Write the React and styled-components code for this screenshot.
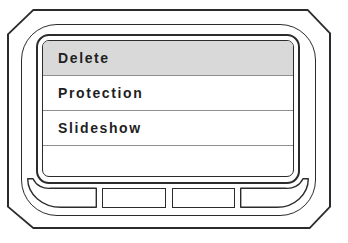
import React from "react";
import styled, { createGlobalStyle } from "styled-components";

const GlobalStyle = createGlobalStyle`
  html, body {
    margin: 0;
    padding: 0;
    background: #ffffff;
  }
  * {
    box-sizing: border-box;
  }
`;

const LINE = "#2b2b2b";

const Page = styled.div`
  width: 348px;
  height: 243px;
  padding: 9px 17px 14px 7px;
  background: #ffffff;
`;

const Frame = styled.div`
  width: 324px;
  height: 220px;
  padding: 1.8px;
  background: ${LINE};
  clip-path: polygon(
    26px 0,
    calc(100% - 23px) 0,
    100% 24px,
    100% calc(100% - 22px),
    calc(100% - 21px) 100%,
    26px 100%,
    0 calc(100% - 22px),
    0 25px
  );
`;

const FrameInner = styled.div`
  height: 100%;
  display: flex;
  flex-direction: column;
  padding: 13.2px 13.2px 11.2px 12.2px;
  background: #ffffff;
  clip-path: polygon(
    25px 0,
    calc(100% - 22px) 0,
    100% 23px,
    100% calc(100% - 21px),
    calc(100% - 20px) 100%,
    25px 100%,
    0 calc(100% - 21px),
    0 24px
  );
`;

const Body = styled.div`
  flex: 1;
  display: flex;
  flex-direction: column;
  border: 1.4px solid ${LINE};
  border-radius: 36px;
  padding: 8.6px 5.6px 6.6px 4.6px;
`;

const Bezel = styled.div`
  height: 150px;
  margin: 0 9px;
  border: 2px solid ${LINE};
  border-radius: 13px;
  padding: 4.5px;
  display: flex;
`;

const Screen = styled.div`
  flex: 1;
  display: flex;
  flex-direction: column;
  border: 1.2px solid ${LINE};
  border-radius: 7px;
  overflow: hidden;
`;

const Row = styled.div`
  height: 35px;
  flex-shrink: 0;
  display: flex;
  align-items: center;
  padding-left: 15px;
  border-bottom: 1px solid #8e8e8e;
  background: ${(p) => (p.$selected ? "#d9d9d9" : "#ffffff")};
  font-family: "Liberation Sans", Arial, sans-serif;
  font-weight: 700;
  font-size: 14px;
  letter-spacing: 1.6px;
  color: #1f1f1f;
`;

const EmptyRow = styled.div`
  flex: 1;
`;

const Keys = styled.div`
  height: 30px;
  margin-top: -6px;
  display: flex;
  align-items: flex-end;
  justify-content: space-between;
`;

const Key = styled.div`
  width: ${(p) => p.$w}px;
  height: 20px;
  border: 1.4px solid ${LINE};
`;

const EndKeyBox = styled.div`
  width: ${(p) => p.$w}px;
  height: 30px;
  display: flex;
`;

const EndKey = ({ side }) => {
  const left =
    "M0.7,0.7 L6,0.7 A17,16 0 0 0 24,10.2 L69.3,10.2 L69.3,29.3 L34,29.3 A33.3,28.6 0 0 1 0.7,0.7 Z";
  const right =
    "M68.3,0.7 L63,0.7 A17,16 0 0 1 45,10.2 L0.7,10.2 L0.7,29.3 L37,29.3 A31.3,28.6 0 0 0 68.3,0.7 Z";
  const w = side === "left" ? 70 : 69;
  return (
    <EndKeyBox $w={w}>
      <svg width={w} height="30" viewBox={`0 0 ${w} 30`}>
        <path
          d={side === "left" ? left : right}
          fill="none"
          stroke={LINE}
          strokeWidth="1.4"
          strokeLinejoin="round"
        />
      </svg>
    </EndKeyBox>
  );
};

const items = ["Delete", "Protection", "Slideshow"];

export default function App() {
  return (
    <>
      <GlobalStyle />
      <Page>
        <Frame>
          <FrameInner>
            <Body>
              <Bezel>
                <Screen>
                  {items.map((label, i) => (
                    <Row key={label} $selected={i === 0}>
                      {label}
                    </Row>
                  ))}
                  <EmptyRow />
                </Screen>
              </Bezel>
              <Keys>
                <EndKey side="left" />
                <Key $w={64} />
                <Key $w={63} />
                <EndKey side="right" />
              </Keys>
            </Body>
          </FrameInner>
        </Frame>
      </Page>
    </>
  );
}
